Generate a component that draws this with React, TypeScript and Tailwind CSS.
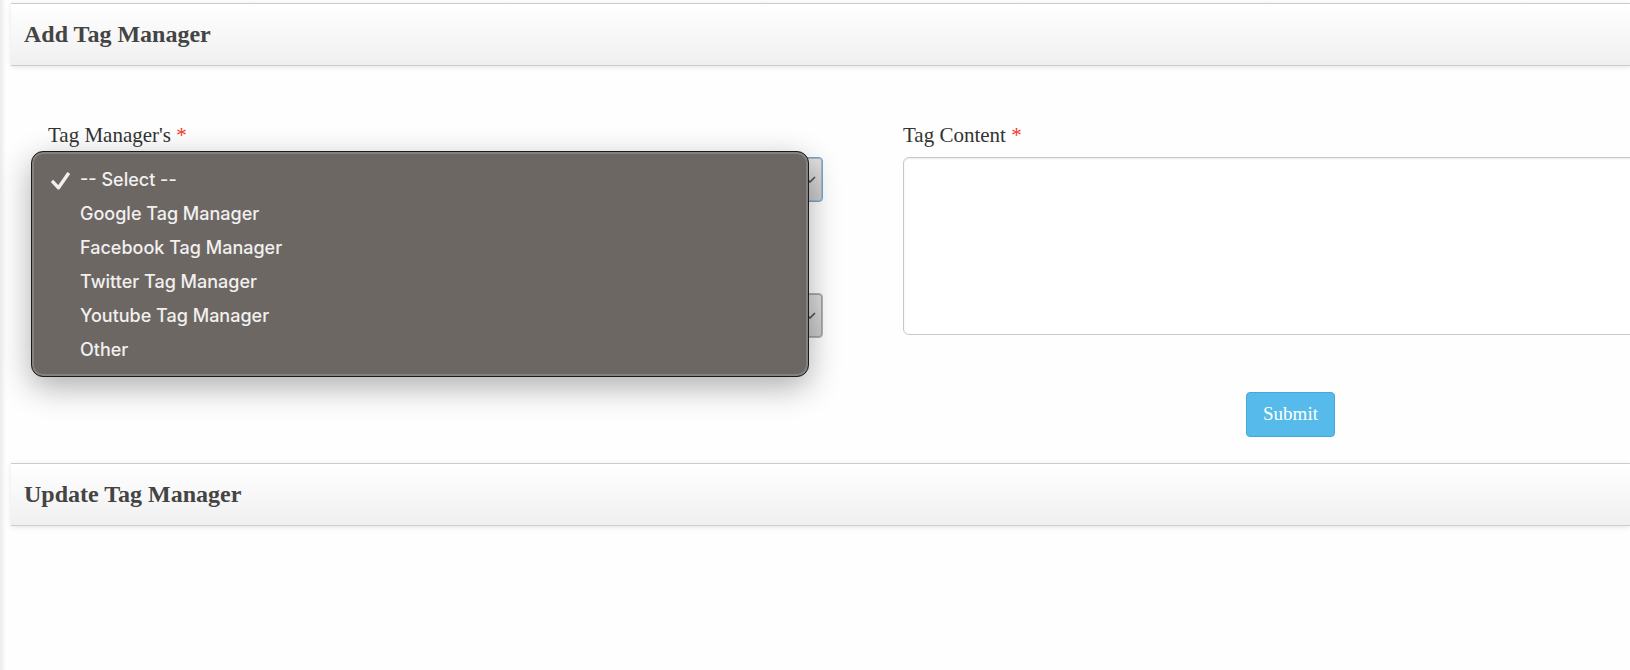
import { useState } from "react";

const managers = [
  "-- Select --",
  "Google Tag Manager",
  "Facebook Tag Manager",
  "Twitter Tag Manager",
  "Youtube Tag Manager",
  "Other",
];

const SectionHeader = ({ title }: { title: string }) => (
  <header className="flex h-[63px] items-center border-y border-[#cdcdcd] bg-linear-to-b from-white to-[#f0f0f0] px-[13px] pb-0.5 shadow-[0_1px_5px_rgba(0,0,0,0.1)]">
    <h2 className="text-2xl font-bold text-[#444]">{title}</h2>
  </header>
);

const Required = () => <span className="text-[#f5382c]">*</span>;

const Chevron = () => (
  <svg
    className="pointer-events-none absolute top-[19px] right-[7px] h-[7px] w-3"
    viewBox="0 0 12 7"
    fill="none"
    stroke="#555"
    strokeWidth="1.7"
  >
    <path d="M1 1l5 5 5-5" />
  </svg>
);

const CheckMark = () => (
  <svg
    className="mt-0.5 h-[18px] w-[19px]"
    viewBox="0 0 19 18"
    fill="none"
    stroke="#f1f0ef"
    strokeWidth="3.4"
    strokeLinejoin="round"
  >
    <path d="M1 8.8l6.5 7L17.8 1" />
  </svg>
);

const App = () => {
  const [selected, setSelected] = useState(managers[0]);
  const [isOpen, setIsOpen] = useState(true);

  const onPick = (name: string) => {
    setSelected(name);
    setIsOpen(false);
  };

  return (
    <div className="min-h-screen overflow-hidden bg-linear-to-r from-[#ebebeb] to-[#fefefe] to-[6px] pt-[3px] pl-[11px] font-['Liberation_Serif',serif] text-[#333]">
      <SectionHeader title="Add Tag Manager" />

      <form
        className="-mr-12 ml-[37px] grid grid-cols-2 gap-20 pt-[54px] pb-[26px]"
        onSubmit={(e) => e.preventDefault()}
      >
        <div className="relative">
          <label htmlFor="manager" className="block text-[21px] leading-[30px]">
            Tag Manager's <Required />
          </label>
          <div className="relative mt-[7px]">
            <select
              id="manager"
              value={selected}
              onChange={(e) => setSelected(e.target.value)}
              onClick={() => setIsOpen(true)}
              className="block h-[45px] w-full appearance-none rounded border border-[#6fa6d8] bg-linear-to-b from-[#e2e2e2] to-[#cacaca] px-3 text-lg inset-ring inset-ring-[#b4b4b4] outline-none"
            >
              {managers.map((name) => (
                <option key={name}>{name}</option>
              ))}
            </select>
            <Chevron />
          </div>

          <div className="relative mt-[91px]">
            <select
              aria-label="Option"
              className="block h-[45px] w-full appearance-none rounded border border-[#b4b4b4] bg-linear-to-b from-[#dedede] to-[#cacaca] px-3 text-lg inset-ring inset-ring-[#a2a2a2] outline-none"
            />
            <Chevron />
          </div>

          {/* Open menu */}
          {isOpen && (
            <ul
              role="listbox"
              className="absolute top-[31px] right-[14px] -left-[17px] z-10 rounded-xl border border-[#1c1b1b] bg-[#6d6764] pt-[11px] pb-[9px] font-[Inter,sans-serif] text-lg font-medium text-[#f1f0ef] inset-ring-2 inset-ring-[#858180] shadow-[0_10px_32px_rgba(0,0,0,0.32)]"
            >
              {managers.map((name) => (
                <li
                  key={name}
                  role="option"
                  aria-selected={name === selected}
                  onClick={() => onPick(name)}
                  className="flex h-[34px] cursor-default items-center pl-[19px]"
                >
                  <span className="w-[29px]">
                    {name === selected && <CheckMark />}
                  </span>
                  {name}
                </li>
              ))}
            </ul>
          )}
        </div>

        <div className="flex flex-col">
          <label htmlFor="content" className="block text-[21px] leading-[30px]">
            Tag Content <Required />
          </label>
          <textarea
            id="content"
            className="mt-[7px] block h-[178px] w-full resize-none rounded-md border border-[#c8c8c8] bg-white p-3 text-lg inset-shadow-[0_1px_2px_rgba(0,0,0,0.08)] outline-none"
          />
          <button
            type="submit"
            className="mt-[57px] h-[45px] self-center rounded border border-[#46a8d8] bg-[#56bbeb] px-4 text-[19px] text-white"
          >
            Submit
          </button>
        </div>
      </form>

      <SectionHeader title="Update Tag Manager" />
    </div>
  );
};

export default App;
